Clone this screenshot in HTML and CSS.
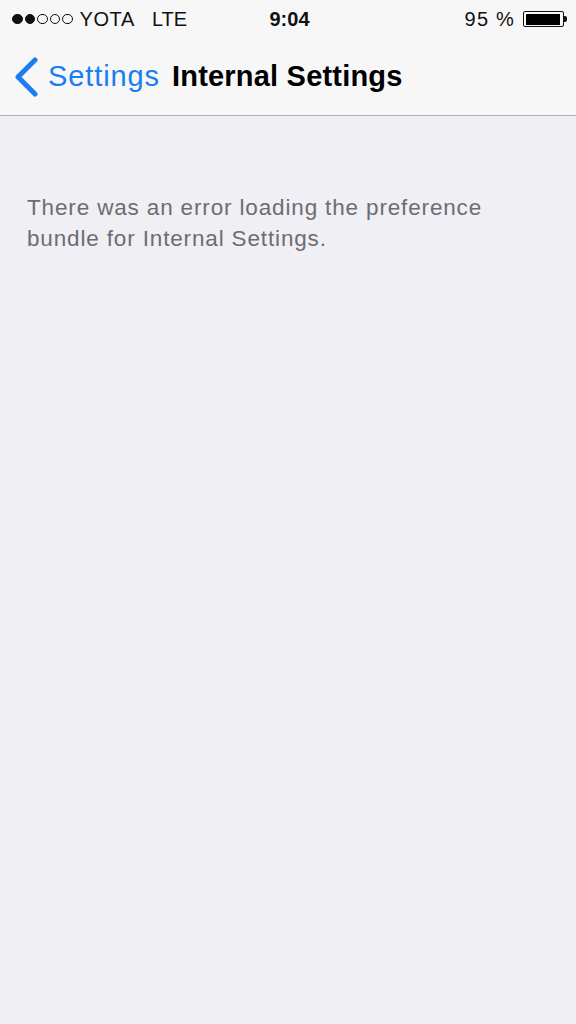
FILE: index.html
```html
<!DOCTYPE html>
<html lang="en">
<head>
    <meta charset="UTF-8">
    <meta name="viewport" content="width=device-width, initial-scale=1.0">
    <title>Internal Settings</title>
    <link rel="stylesheet" href="styles.css">
</head>
<body>
    <!-- top bar -->
    <div class="top">
        <div class="status">
            <div class="left">
                <span class="dots">
                    <i class="on"></i><i class="on"></i><i></i><i></i><i></i>
                </span>
                <span class="carrier">YOTA</span>
                <span class="net">LTE</span>
            </div>
            <div class="time">9:04</div>
            <div class="right">
                <span class="pct">95 %</span>
                <span class="battery"><span class="level"></span></span>
                <span class="tip"></span>
            </div>
        </div>
        <div class="nav">
            <a class="back" href="#">
                <svg width="26" height="40" viewBox="0 0 26 40">
                    <path d="M22 3 L5 20 L22 37" fill="none" stroke="#1a7df0" stroke-width="5" stroke-linecap="round" stroke-linejoin="round"/>
                </svg>
                <span>Settings</span>
            </a>
            <h1 class="title">Internal Settings</h1>
        </div>
    </div>
    <!-- content -->
    <p class="msg">There was an error loading the preference bundle for Internal Settings.</p>
</body>
</html>
```

FILE: styles.css
```css
*{
    box-sizing: border-box;
}
body{
    margin: 0;
    height: 1024px;
    background-color: #efeff4;
    font-family: "Liberation Sans", Arial, sans-serif;
}
.top{
    background-color: #f7f7f8;
    border-bottom: 1px solid #b2b2b6;
}
.status{
    height: 38px;
    display: flex;
    align-items: center;
    justify-content: space-between;
    padding: 0 9px 0 12px;
    font-size: 20px;
    color: #111;
}
.left, .right{
    flex: 1;
    display: flex;
    align-items: center;
}
.right{
    justify-content: flex-end;
}
.dots{
    display: flex;
    gap: 2px;
}
.dots i{
    width: 10.5px;
    height: 10.5px;
    border-radius: 50%;
    border: 1.3px solid #111;
}
.dots i.on{
    background-color: #111;
}
.carrier{
    margin-left: 7px;
    letter-spacing: 0.6px;
}
.net{
    margin-left: 17px;
}
.time{
    font-weight: bold;
    font-size: 20px;
}
.pct{
    margin-right: 8px;
    letter-spacing: 1.2px;
}
.battery{
    width: 41px;
    height: 16px;
    border: 1.5px solid #111;
    border-radius: 2px;
    padding: 1.5px;
    display: flex;
}
.level{
    width: 95%;
    background-color: #000;
}
.tip{
    width: 3px;
    height: 6px;
    background-color: #111;
    border-radius: 0 2px 2px 0;
}
.nav{
    height: 77px;
    display: flex;
    align-items: center;
    padding: 0 0 0 13px;
}
.back{
    display: flex;
    align-items: center;
    text-decoration: none;
    color: #1a7df0;
    font-size: 29px;
    letter-spacing: 0.9px;
}
.back span{
    margin-left: 9px;
}
.title{
    margin: 0 0 0 12px;
    font-size: 29px;
    font-weight: bold;
    color: #000;
    letter-spacing: 0.2px;
}
.msg{
    margin: 76px 60px 0 27px;
    font-size: 22.5px;
    line-height: 31px;
    letter-spacing: 0.85px;
    color: #6d6d72;
}
```
